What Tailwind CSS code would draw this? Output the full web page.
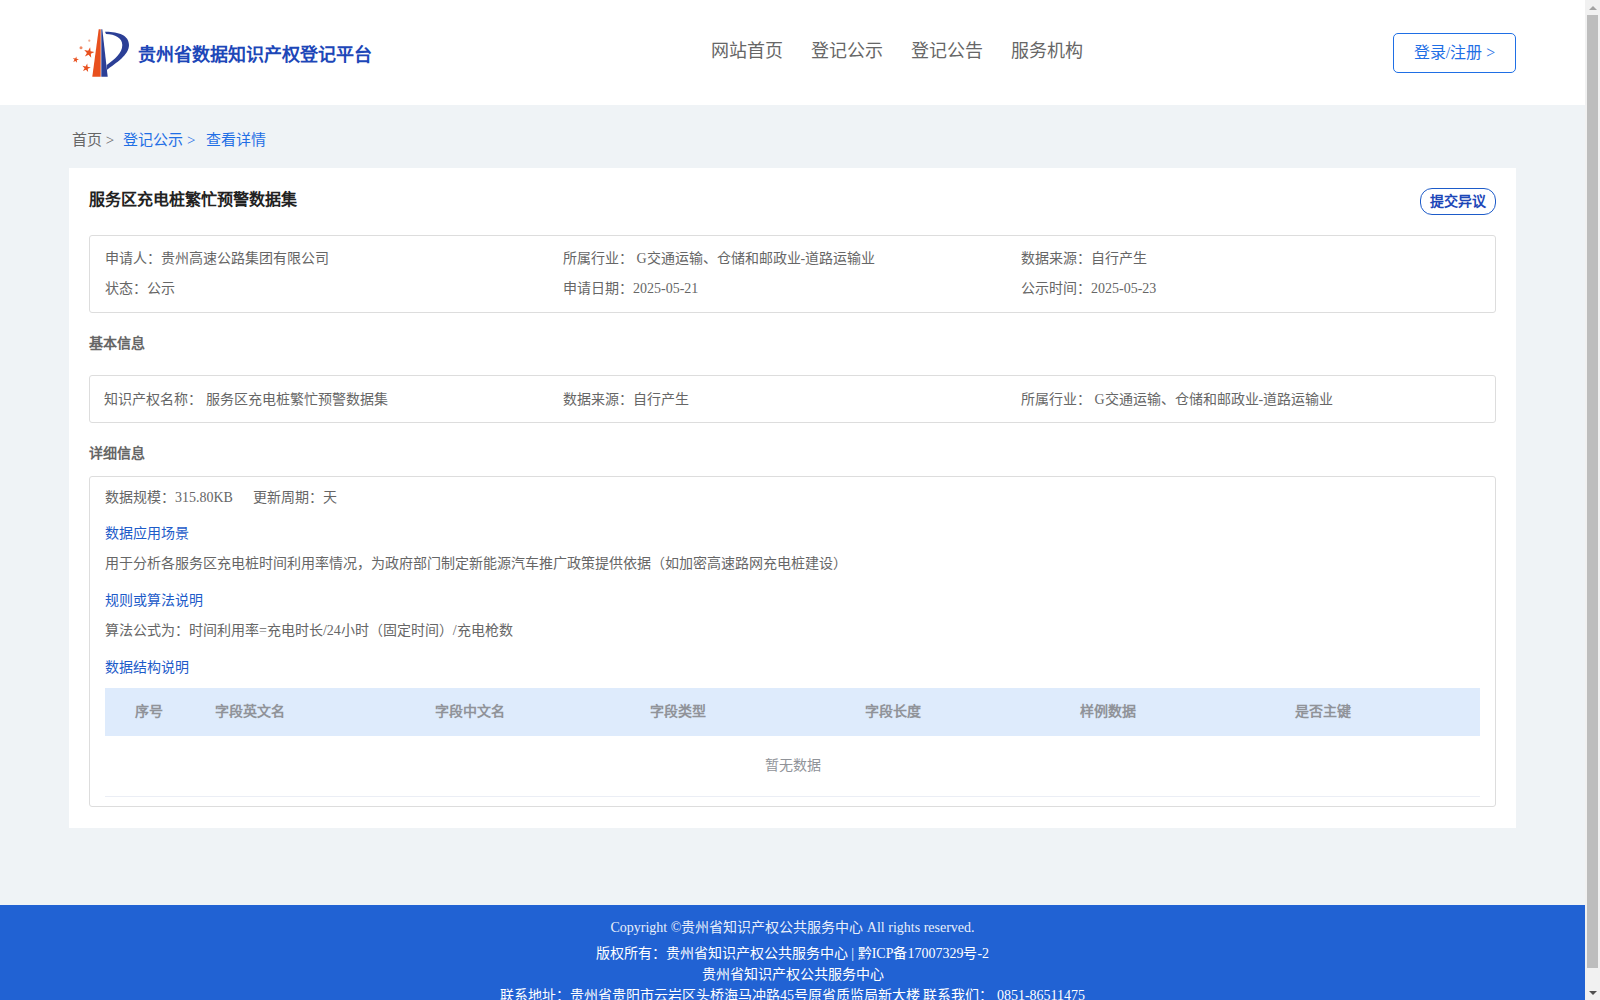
<!DOCTYPE html>
<html lang="zh-CN">
<head>
  <meta charset="UTF-8" />
  <title>贵州省数据知识产权登记平台</title>
  <script src="https://cdn.jsdelivr.net/npm/@tailwindcss/browser@4"></script>
</head>
<body class="h-screen overflow-hidden flex bg-[#eff3f6] font-['Liberation_Serif',serif] text-[14px] text-[#666]">
  <div class="flex-1 min-w-0 h-full overflow-hidden">
    <!-- 顶部导航 -->
    <header class="h-[105px] bg-white flex items-center justify-between pl-[72px] pr-[69px]">
      <div class="flex items-center w-[329px]">
        <svg class="w-[60px] h-[54px]" viewBox="0 0 60 54">
          <defs><polygon id="star" points="0,-1 .225,-.31 .95,-.31 .36,.12 .59,.81 0,.38 -.59,.81 -.36,.12 -.95,-.31 -.225,-.31"/></defs>
          <polygon points="26.700,3.300 28.700,3.300 28.700,50.700 20.300,50.700" fill="#e8501e"/>
          <polygon points="29.300,3.300 30.300,3.300 35.700,50.700 29.300,50.700" fill="#2b3f96"/>
          <path d="M33 5.700 C46 5.500 57 9 57 19 C57 29 44 37 34.700 44 L34.700 39 C43 33 50.300 27 50.300 19 C50.300 12 43 8 34 8 Z" fill="#2b3f96"/>
          <use href="#star" transform="translate(17 26.700) rotate(12) scale(5.500)" fill="#e8501e"/>
          <use href="#star" transform="translate(3.700 33.700) rotate(12) scale(3.300)" fill="#e8501e"/>
          <use href="#star" transform="translate(14.300 42) rotate(12) scale(4.500)" fill="#e8501e"/>
          <circle cx="9" cy="21.700" r="1.500" fill="#ef8a66"/>
          <circle cx="17.300" cy="14.700" r="1.100" fill="#efa88e"/>
        </svg>
        <span class="ml-[6px] mt-[6px] text-[18px] font-bold text-[#1d47b8]">贵州省数据知识产权登记平台</span>
      </div>
      <nav class="flex gap-[28px] text-[18px] text-[#666] -mt-[2px]">
        <a>网站首页</a><a>登记公示</a><a>登记公告</a><a>服务机构</a>
      </nav>
      <a class="w-[123px] h-[40px] flex items-center justify-center border border-[#1f6fe5] rounded-[5px] text-[16px] text-[#1f6fe5]">登录/注册 &gt;</a>
    </header>

    <main class="w-[1447px] mx-auto">
      <div class="h-[63px] flex items-center pl-[3px] pt-[7px] text-[15px]">
        <span>首页 &gt;</span>
        <span class="ml-[9px] text-[#1f6fe5]">登记公示 &gt;</span>
        <span class="ml-[11px] text-[#1f6fe5]">查看详情</span>
      </div>

      <section class="bg-white h-[660px] px-[20px] pt-[20px]">
        <div class="flex justify-between items-start h-[47px]">
          <h1 class="text-[16px] font-bold text-[#222]">服务区充电桩繁忙预警数据集</h1>
          <button class="w-[76px] h-[27px] border border-[#1d5bc9] rounded-[12px] font-bold text-[#1d47b8]">提交异议</button>
        </div>

        <div class="border border-[#ddd] rounded-[3px] h-[78px] pl-[15px] pt-[7px] grid grid-cols-[458px_458px_1fr] auto-rows-[30px] items-center">
          <div>申请人：贵州高速公路集团有限公司</div>
          <div>所属行业： G交通运输、仓储和邮政业-道路运输业</div>
          <div>数据来源：自行产生</div>
          <div>状态：公示</div>
          <div>申请日期：2025-05-21</div>
          <div>公示时间：2025-05-23</div>
        </div>

        <h2 class="mt-[20px] text-[14px] font-bold">基本信息</h2>

        <div class="mt-[21px] border border-[#ddd] rounded-[3px] h-[48px] pl-[14px] grid grid-cols-[459px_458px_1fr] items-center">
          <div>知识产权名称： 服务区充电桩繁忙预警数据集</div>
          <div>数据来源：自行产生</div>
          <div>所属行业： G交通运输、仓储和邮政业-道路运输业</div>
        </div>

        <h2 class="mt-[20px] text-[14px] font-bold">详细信息</h2>

        <div class="mt-[12px] border border-[#ddd] rounded-[3px] h-[331px] px-[15px] pt-[10px]">
          <div class="flex gap-[20px]"><span>数据规模：315.80KB</span><span>更新周期：天</span></div>
          <div class="mt-[15px] text-[#1d5bc9]">数据应用场景</div>
          <p class="mt-[9px]">用于分析各服务区充电桩时间利用率情况，为政府部门制定新能源汽车推广政策提供依据（如加密高速路网充电桩建设）</p>
          <div class="mt-[16px] text-[#1d5bc9]">规则或算法说明</div>
          <p class="mt-[9px]">算法公式为：时间利用率=充电时长/24小时（固定时间）/充电枪数</p>
          <div class="mt-[16px] text-[#1d5bc9]">数据结构说明</div>
          <table class="mt-[10px] w-full table-fixed border-b border-[#ebeef5]">
            <thead>
              <tr class="h-[48px] bg-[#deebfc] text-[#909399] font-bold text-left">
                <th class="w-[110px] pl-[30px] pb-[2px]">序号</th>
                <th class="w-[220px] pb-[2px]">字段英文名</th>
                <th class="w-[215px] pb-[2px]">字段中文名</th>
                <th class="w-[215px] pb-[2px]">字段类型</th>
                <th class="w-[215px] pb-[2px]">字段长度</th>
                <th class="w-[215px] pb-[2px]">样例数据</th>
                <th class="pb-[2px]">是否主键</th>
              </tr>
            </thead>
            <tbody>
              <tr class="h-[60px]"><td colspan="7" class="text-center text-[#909399]">暂无数据</td></tr>
            </tbody>
          </table>
        </div>
      </section>
    </main>

    <!-- 页脚 -->
    <footer class="mt-[77px] bg-[#2162d3] text-white text-center pt-[12px] leading-[21px]">
      <div class="opacity-90">Copyright ©贵州省知识产权公共服务中心 All rights reserved.</div>
      <div class="mt-[5px]">版权所有：贵州省知识产权公共服务中心 | 黔ICP备17007329号-2</div>
      <div>贵州省知识产权公共服务中心</div>
      <div>联系地址：贵州省贵阳市云岩区头桥海马冲路45号原省质监局新大楼 联系我们： 0851-86511475</div>
    </footer>
  </div>

  <!-- 滚动条 -->
  <div class="w-[15px] h-full shrink-0 bg-[#f1f1f1] flex flex-col items-center">
    <div class="h-[15px] flex items-center justify-center">
      <div class="w-0 h-0 border-x-[4px] border-x-transparent border-b-[4px] border-b-[#a3a3a3]"></div>
    </div>
    <div class="w-[11px] h-[953px] bg-[#bdbdbd]"></div>
    <div class="mt-auto h-[15px] flex items-center justify-center">
      <div class="w-0 h-0 border-x-[4px] border-x-transparent border-t-[4px] border-t-[#505050]"></div>
    </div>
  </div>
</body>
</html>
